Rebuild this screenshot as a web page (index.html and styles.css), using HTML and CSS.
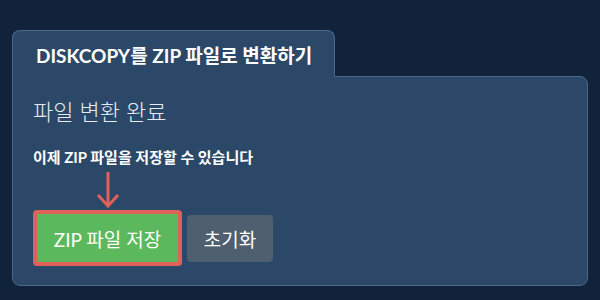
FILE: index.html
```html
<!DOCTYPE html>
<html lang="ko">
<head>
    <meta charset="UTF-8">
    <meta name="viewport" content="width=device-width, initial-scale=1.0">
    <title>DISKCOPY를 ZIP 파일로 변환하기</title>
    <link rel="stylesheet" href="styles.css">
</head>
<body>

    <div class="tab">DISKCOPY를 ZIP 파일로 변환하기</div>

    <div class="panel">
        <h2 class="status">파일 변환 완료</h2>
        <p class="message">이제 ZIP 파일을 저장할 수 있습니다</p>

        <div class="actions">
            <div class="save-wrap">
                <svg class="arrow" width="24" height="36" viewBox="0 0 24 36">
                    <path d="M12 0 V34 M2 23 L12 34 L22 23" fill="none" stroke="#e0605a" stroke-width="3"/>
                </svg>
                <button class="button save">ZIP 파일 저장</button>
            </div>
            <button class="button reset">초기화</button>
        </div>
    </div>

</body>
</html>
```

FILE: styles.css
```css
body {
    margin: 0;
    padding: 30px 12px 0;
    background-color: #10233a;
    color: white;
    font-family: Lato, "Noto Sans CJK KR", sans-serif;
}
.tab {
    position: relative;
    width: 323px;
    height: 47px;
    box-sizing: border-box;
    margin-bottom: -1px;
    padding: 10px 0 0 23px;
    background: #2c4868;
    border: 1px solid #4a6a8a;
    border-bottom: none;
    border-radius: 8px 8px 0 0;
    font-size: 19px;
    font-weight: bold;
}
.panel {
    height: 210px;
    box-sizing: border-box;
    padding: 17px 20px;
    background: #2c4868;
    border: 1px solid #4a6a8a;
    border-radius: 0 8px 8px 8px;
}
.status {
    margin: 0;
    font-size: 22px;
    font-weight: 300;
    color: #e6ebf0;
}
.message {
    margin: 20px 0 0;
    font-size: 15px;
    font-weight: bold;
}
.actions {
    display: flex;
    align-items: flex-end;
    gap: 5px;
    margin-top: 5px;
}
.save-wrap {
    display: flex;
    flex-direction: column;
    align-items: center;
    gap: 2px;
}
.arrow {
    display: block;
}
.button {
    font-family: Lato, "Noto Sans CJK KR", sans-serif;
    font-size: 19px;
    color: white;
    border: none;
    border-radius: 4px;
    cursor: pointer;
}
.save {
    width: 149px;
    height: 56px;
    background-color: #5cb85c;
    border: 4px solid #e0605a;
}
.reset {
    width: 86px;
    height: 47px;
    margin-bottom: 4px;
    background-color: #4f5f70;
}
```
